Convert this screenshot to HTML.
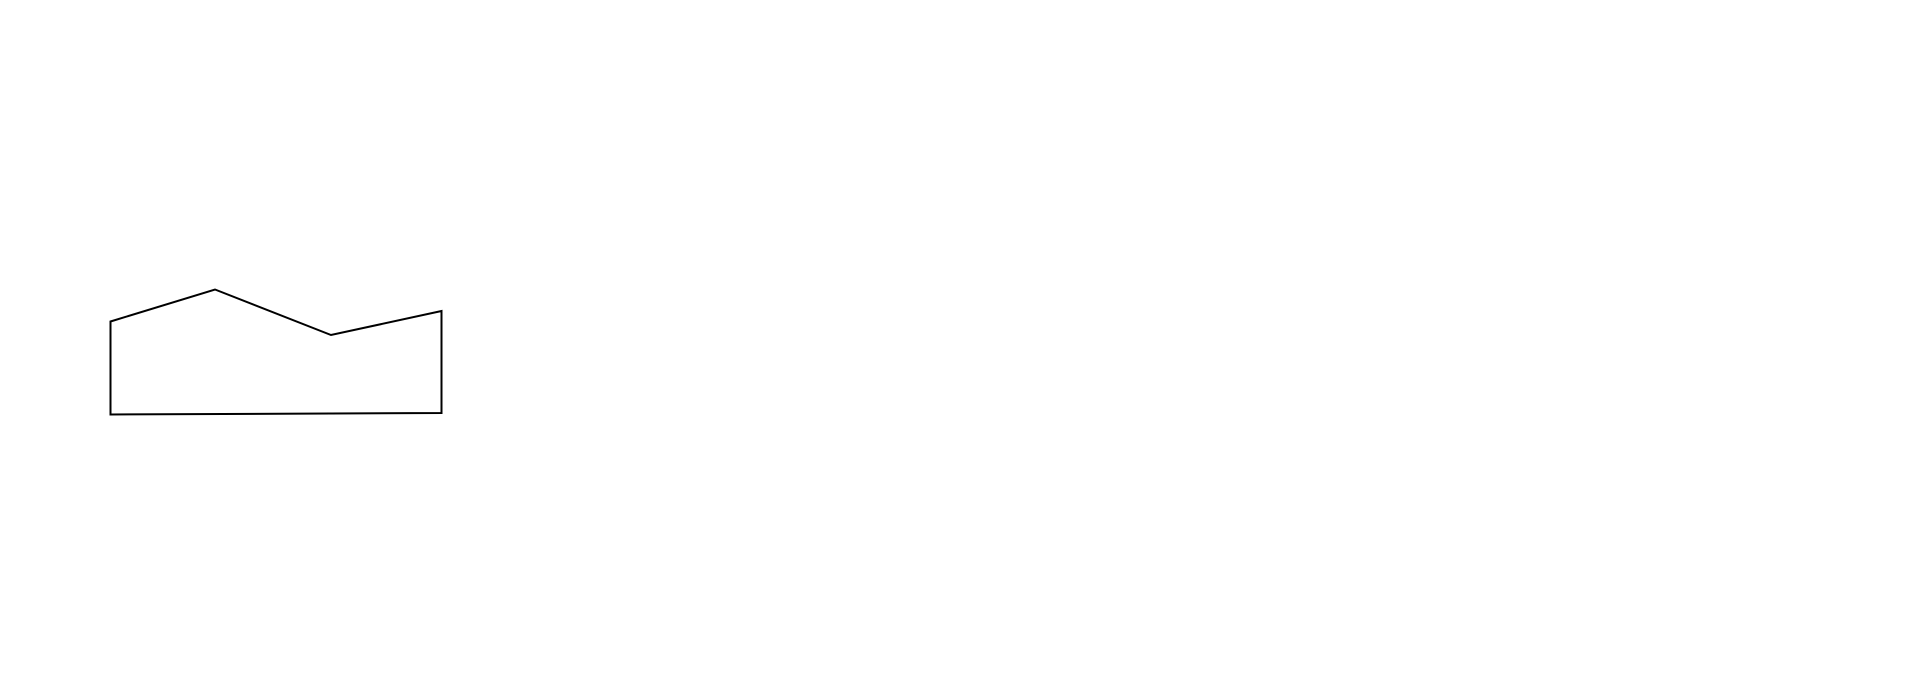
<!DOCTYPE html>
<html><head><style>html,body{margin:0;padding:0;background:#fff;width:1920px;height:685px;overflow:hidden}</style></head>
<body><svg width="1920" height="685" style="display:block"><polygon points="110.5,321.5 215,289.5 331,335 441.5,311 441.5,413 110.5,414.5" fill="none" stroke="#000" stroke-width="2"/></svg></body></html>
